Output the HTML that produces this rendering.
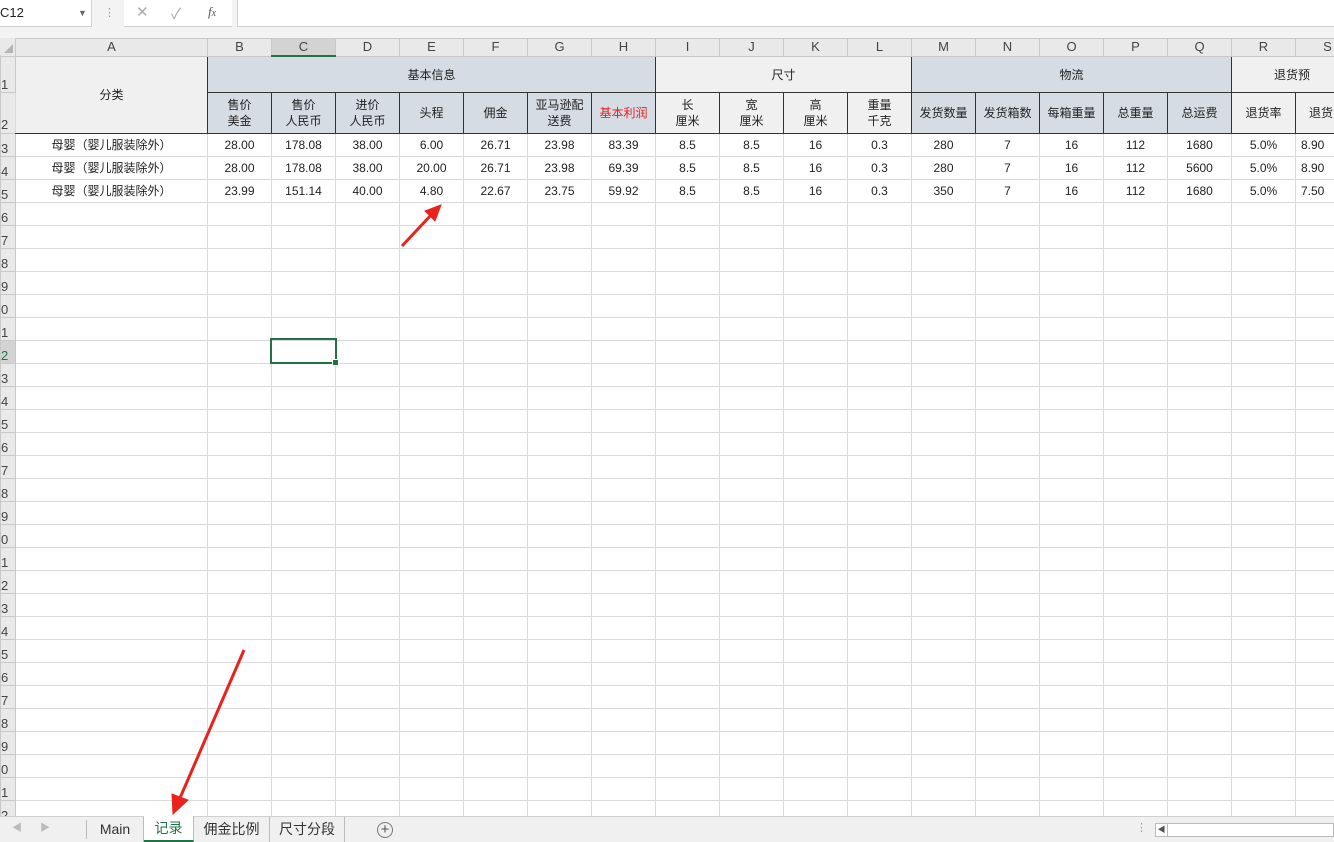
<!DOCTYPE html>
<html><head><meta charset="utf-8"><style>
*{margin:0;padding:0;box-sizing:border-box}
body{width:1334px;height:842px;overflow:hidden;background:#fff;font-family:"Liberation Sans","Noto Sans CJK SC",sans-serif;font-size:12px;color:#222;position:relative}
#fb{position:absolute;left:0;top:0;width:1334px;height:38px;background:#f3f3f3}
#nb{position:absolute;left:0;top:0;width:92px;height:27px;background:#fff;border-right:1px solid #d0d0d0;border-bottom:1px solid #d0d0d0;font-size:13px;line-height:26px;padding-left:0}
#fx{position:absolute;left:124px;top:0;width:108px;height:27px;background:#fff;border-bottom:1px solid #d0d0d0}
#fi{position:absolute;left:237px;top:0;width:1097px;height:27px;background:#fff;border-left:1px solid #d0d0d0;border-bottom:1px solid #d0d0d0}
table{position:absolute;left:0;top:38px;border-collapse:collapse;table-layout:fixed;width:1359px}
td{border:1px solid #dadada;text-align:center;white-space:nowrap;overflow:hidden;padding:0;font-size:12px}
tr.ch td{height:17px;background:#e9e9e9;color:#444;font-size:13px;border-color:#c8c8c8;line-height:16px}
td.rn{background:#e9e9e9;color:#444;text-align:left;font-size:13px;border-color:#c8c8c8;padding-left:0;vertical-align:bottom}
tr.r td{height:23px}
.h{border:1px solid #333}
.b{background:#d6dce4}
.g{background:#f0f0f0}
.sh td{line-height:16px}
#sel{position:absolute;left:270px;top:338px;width:67px;height:26px;border:2px solid #217346}
#sel:after{content:"";position:absolute;right:-4px;bottom:-4px;width:5px;height:5px;background:#217346;border:1px solid #fff}
#tabs{position:absolute;left:0;top:816px;width:1334px;height:26px;background:#f0f0f0;border-top:1px solid #d0d0d0;font-size:14px;color:#333}
.t{position:absolute;top:0;height:25px;line-height:24px;text-align:center;border-right:1px solid #bbb}
</style></head><body>
<div id="fb"></div>
<div id="nb">C12<span style="position:absolute;left:78px;top:0;font-size:9px;color:#666">▼</span></div>
<div style="position:absolute;left:104px;top:6px;color:#999;font-size:11px">⋮</div>
<div id="fx"><span style="position:absolute;left:12px;top:3px;color:#aaa;font-size:15px">✕</span><span style="position:absolute;left:47px;top:3px;color:#aaa;font-size:15px">✓</span><span style="position:absolute;left:84px;top:4px;color:#555;font-family:'Liberation Serif',serif;font-style:italic;font-size:13px">f<span style="font-size:10px">x</span></span></div>
<div id="fi"></div>
<table>
<colgroup><col style="width:15px"><col style="width:192px"><col span="18" style="width:64px"></colgroup>
<tr class="ch"><td class="rn" style="background:#e9e9e9"></td><td>A</td><td>B</td><td style="background:#d3d3d3;border-bottom:2px solid #217346">C</td><td>D</td><td>E</td><td>F</td><td>G</td><td>H</td><td>I</td><td>J</td><td>K</td><td>L</td><td>M</td><td>N</td><td>O</td><td>P</td><td>Q</td><td>R</td><td>S</td></tr>
<tr style="height:36px"><td class="rn">1</td><td rowspan="2" class="g" style="border-right:1px solid #333;border-bottom:1px solid #333">分类</td><td colspan="7" class="h b">基本信息</td><td colspan="4" class="h g">尺寸</td><td colspan="5" class="h b">物流</td><td colspan="2" class="h g" style="text-align:left;padding-left:42px">退货预</td></tr>
<tr style="height:41px" class="sh"><td class="rn">2</td><td class="h b">售价<br>美金</td><td class="h b">售价<br>人民币</td><td class="h b">进价<br>人民币</td><td class="h b">头程</td><td class="h b">佣金</td><td class="h b">亚马逊配<br>送费</td><td class="h b" style="color:#e02020">基本利润</td><td class="h g">长<br>厘米</td><td class="h g">宽<br>厘米</td><td class="h g">高<br>厘米</td><td class="h g">重量<br>千克</td><td class="h b">发货数量</td><td class="h b">发货箱数</td><td class="h b">每箱重量</td><td class="h b">总重量</td><td class="h b">总运费</td><td class="h g">退货率</td><td class="h g" style="text-align:left;padding-left:13px">退货</td></tr>
<tr class="r"><td class="rn">3</td><td>母婴（婴儿服装除外）</td><td>28.00</td><td>178.08</td><td>38.00</td><td>6.00</td><td>26.71</td><td>23.98</td><td>83.39</td><td>8.5</td><td>8.5</td><td>16</td><td>0.3</td><td>280</td><td>7</td><td>16</td><td>112</td><td>1680</td><td>5.0%</td><td style="text-align:left;padding-left:5px">8.90</td></tr>
<tr class="r"><td class="rn">4</td><td>母婴（婴儿服装除外）</td><td>28.00</td><td>178.08</td><td>38.00</td><td>20.00</td><td>26.71</td><td>23.98</td><td>69.39</td><td>8.5</td><td>8.5</td><td>16</td><td>0.3</td><td>280</td><td>7</td><td>16</td><td>112</td><td>5600</td><td>5.0%</td><td style="text-align:left;padding-left:5px">8.90</td></tr>
<tr class="r"><td class="rn">5</td><td>母婴（婴儿服装除外）</td><td>23.99</td><td>151.14</td><td>40.00</td><td>4.80</td><td>22.67</td><td>23.75</td><td>59.92</td><td>8.5</td><td>8.5</td><td>16</td><td>0.3</td><td>350</td><td>7</td><td>16</td><td>112</td><td>1680</td><td>5.0%</td><td style="text-align:left;padding-left:5px">7.50</td></tr>
<tr class="r"><td class="rn">6</td><td></td><td></td><td></td><td></td><td></td><td></td><td></td><td></td><td></td><td></td><td></td><td></td><td></td><td></td><td></td><td></td><td></td><td></td><td></td></tr>
<tr class="r"><td class="rn">7</td><td></td><td></td><td></td><td></td><td></td><td></td><td></td><td></td><td></td><td></td><td></td><td></td><td></td><td></td><td></td><td></td><td></td><td></td><td></td></tr>
<tr class="r"><td class="rn">8</td><td></td><td></td><td></td><td></td><td></td><td></td><td></td><td></td><td></td><td></td><td></td><td></td><td></td><td></td><td></td><td></td><td></td><td></td><td></td></tr>
<tr class="r"><td class="rn">9</td><td></td><td></td><td></td><td></td><td></td><td></td><td></td><td></td><td></td><td></td><td></td><td></td><td></td><td></td><td></td><td></td><td></td><td></td><td></td></tr>
<tr class="r"><td class="rn">0</td><td></td><td></td><td></td><td></td><td></td><td></td><td></td><td></td><td></td><td></td><td></td><td></td><td></td><td></td><td></td><td></td><td></td><td></td><td></td></tr>
<tr class="r"><td class="rn">1</td><td></td><td></td><td></td><td></td><td></td><td></td><td></td><td></td><td></td><td></td><td></td><td></td><td></td><td></td><td></td><td></td><td></td><td></td><td></td></tr>
<tr class="r"><td class="rn" style="color:#217346;background:#d3d3d3">2</td><td></td><td></td><td></td><td></td><td></td><td></td><td></td><td></td><td></td><td></td><td></td><td></td><td></td><td></td><td></td><td></td><td></td><td></td><td></td></tr>
<tr class="r"><td class="rn">3</td><td></td><td></td><td></td><td></td><td></td><td></td><td></td><td></td><td></td><td></td><td></td><td></td><td></td><td></td><td></td><td></td><td></td><td></td><td></td></tr>
<tr class="r"><td class="rn">4</td><td></td><td></td><td></td><td></td><td></td><td></td><td></td><td></td><td></td><td></td><td></td><td></td><td></td><td></td><td></td><td></td><td></td><td></td><td></td></tr>
<tr class="r"><td class="rn">5</td><td></td><td></td><td></td><td></td><td></td><td></td><td></td><td></td><td></td><td></td><td></td><td></td><td></td><td></td><td></td><td></td><td></td><td></td><td></td></tr>
<tr class="r"><td class="rn">6</td><td></td><td></td><td></td><td></td><td></td><td></td><td></td><td></td><td></td><td></td><td></td><td></td><td></td><td></td><td></td><td></td><td></td><td></td><td></td></tr>
<tr class="r"><td class="rn">7</td><td></td><td></td><td></td><td></td><td></td><td></td><td></td><td></td><td></td><td></td><td></td><td></td><td></td><td></td><td></td><td></td><td></td><td></td><td></td></tr>
<tr class="r"><td class="rn">8</td><td></td><td></td><td></td><td></td><td></td><td></td><td></td><td></td><td></td><td></td><td></td><td></td><td></td><td></td><td></td><td></td><td></td><td></td><td></td></tr>
<tr class="r"><td class="rn">9</td><td></td><td></td><td></td><td></td><td></td><td></td><td></td><td></td><td></td><td></td><td></td><td></td><td></td><td></td><td></td><td></td><td></td><td></td><td></td></tr>
<tr class="r"><td class="rn">0</td><td></td><td></td><td></td><td></td><td></td><td></td><td></td><td></td><td></td><td></td><td></td><td></td><td></td><td></td><td></td><td></td><td></td><td></td><td></td></tr>
<tr class="r"><td class="rn">1</td><td></td><td></td><td></td><td></td><td></td><td></td><td></td><td></td><td></td><td></td><td></td><td></td><td></td><td></td><td></td><td></td><td></td><td></td><td></td></tr>
<tr class="r"><td class="rn">2</td><td></td><td></td><td></td><td></td><td></td><td></td><td></td><td></td><td></td><td></td><td></td><td></td><td></td><td></td><td></td><td></td><td></td><td></td><td></td></tr>
<tr class="r"><td class="rn">3</td><td></td><td></td><td></td><td></td><td></td><td></td><td></td><td></td><td></td><td></td><td></td><td></td><td></td><td></td><td></td><td></td><td></td><td></td><td></td></tr>
<tr class="r"><td class="rn">4</td><td></td><td></td><td></td><td></td><td></td><td></td><td></td><td></td><td></td><td></td><td></td><td></td><td></td><td></td><td></td><td></td><td></td><td></td><td></td></tr>
<tr class="r"><td class="rn">5</td><td></td><td></td><td></td><td></td><td></td><td></td><td></td><td></td><td></td><td></td><td></td><td></td><td></td><td></td><td></td><td></td><td></td><td></td><td></td></tr>
<tr class="r"><td class="rn">6</td><td></td><td></td><td></td><td></td><td></td><td></td><td></td><td></td><td></td><td></td><td></td><td></td><td></td><td></td><td></td><td></td><td></td><td></td><td></td></tr>
<tr class="r"><td class="rn">7</td><td></td><td></td><td></td><td></td><td></td><td></td><td></td><td></td><td></td><td></td><td></td><td></td><td></td><td></td><td></td><td></td><td></td><td></td><td></td></tr>
<tr class="r"><td class="rn">8</td><td></td><td></td><td></td><td></td><td></td><td></td><td></td><td></td><td></td><td></td><td></td><td></td><td></td><td></td><td></td><td></td><td></td><td></td><td></td></tr>
<tr class="r"><td class="rn">9</td><td></td><td></td><td></td><td></td><td></td><td></td><td></td><td></td><td></td><td></td><td></td><td></td><td></td><td></td><td></td><td></td><td></td><td></td><td></td></tr>
<tr class="r"><td class="rn">0</td><td></td><td></td><td></td><td></td><td></td><td></td><td></td><td></td><td></td><td></td><td></td><td></td><td></td><td></td><td></td><td></td><td></td><td></td><td></td></tr>
<tr class="r"><td class="rn">1</td><td></td><td></td><td></td><td></td><td></td><td></td><td></td><td></td><td></td><td></td><td></td><td></td><td></td><td></td><td></td><td></td><td></td><td></td><td></td></tr>
<tr class="r"><td class="rn">2</td><td></td><td></td><td></td><td></td><td></td><td></td><td></td><td></td><td></td><td></td><td></td><td></td><td></td><td></td><td></td><td></td><td></td><td></td><td></td></tr>
</table>
<div style="position:absolute;left:0;top:38px;width:15px;height:17px;background:#e9e9e9"><div style="position:absolute;right:2px;bottom:2px;width:0;height:0;border-left:9px solid transparent;border-bottom:9px solid #b5b5b5"></div></div>
<div id="sel"></div>
<div id="tabs">
<span style="position:absolute;left:12px;top:2px;color:#bbb;font-size:10px">◀</span><span style="position:absolute;left:40px;top:2px;color:#bbb;font-size:10px">▶</span>
<div style="position:absolute;left:86px;top:3px;height:19px;border-left:1px solid #bbb"></div>
<div class="t" style="left:87px;width:57px">Main</div>
<div class="t" style="left:144px;width:50px;background:#fff;color:#217346;border-bottom:2px solid #217346;top:-1px;height:26px">记录</div>
<div class="t" style="left:194px;width:76px">佣金比例</div>
<div class="t" style="left:270px;width:75px">尺寸分段</div>
<div style="position:absolute;left:377px;top:5px;width:16px;height:16px;border:1px solid #777;border-radius:50%;text-align:center;line-height:13px;font-size:15px;color:#555">+</div>
<span style="position:absolute;left:1136px;top:4px;color:#999;font-size:11px">⋮</span>
<div style="position:absolute;left:1155px;top:6px;width:179px;height:14px;background:#fff;border:1px solid #bbb"><div style="position:absolute;left:0;top:0;width:12px;height:12px;border-right:1px solid #bbb;font-size:8px;text-align:center;line-height:12px;color:#555">◀</div></div>
</div>
<svg style="position:absolute;left:0;top:0" width="1334" height="842">
<g stroke="#e8231d" stroke-width="3" fill="#e8231d">
<line x1="402" y1="246" x2="432" y2="214"/>
<polygon points="441,205 425,211 435,221" stroke-width="1"/>
<line x1="244" y1="650" x2="180" y2="798"/>
<polygon points="173,814 172,794 188,800" stroke-width="1"/>
</g></svg>
</body></html>
